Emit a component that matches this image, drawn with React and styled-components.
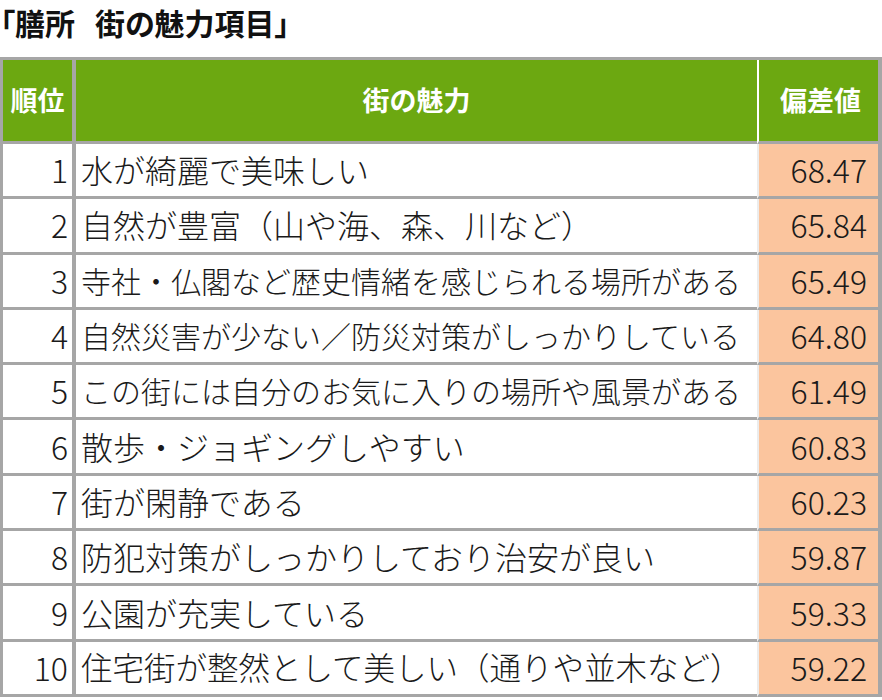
import { styled, createGlobalStyle } from "styled-components";

const GlobalStyle = createGlobalStyle`
	html, body {
		margin: 0;
		padding: 0;
		background: #ffffff;
	}
	body {
		font-family: "Noto Sans CJK JP", "Noto Sans", sans-serif;
		color: #1a1a1a;
		text-spacing-trim: space-all;
	}
`;

const Page = styled.div`
	width: 882px;
`;

const Title = styled.h1`
	margin: 0 0 12px 0;
	height: 45px;
	line-height: 45px;
	font-size: 30px;
	font-weight: 700;
	color: #111;
	white-space: pre;
	font-feature-settings: "palt";
`;

const TitleGap = styled.span`
	display: inline-block;
	width: 20px;
`;

const Table = styled.div`
	display: grid;
	grid-template-columns: 73px 681px 121px;
	grid-template-rows: 84px;
	grid-auto-rows: 55.3px;
	border-top: 3px solid #a6a6a6;
	border-left: 3px solid #a6a6a6;
	border-right: 4px solid #a6a6a6;
	box-sizing: border-box;
	width: 882px;
`;

const HeadCell = styled.div`
	box-sizing: border-box;
	background: #6ca811;
	color: #ffffff;
	font-size: 27px;
	font-weight: 700;
	display: flex;
	align-items: center;
	justify-content: center;
	border-bottom: 3px solid #a6a6a6;
	border-right: ${(p) => (p.$first ? "4px solid #a6a6a6" : "none")};
	border-left: ${(p) => (p.$value ? "2px solid #ffffff" : "none")};
	padding-left: ${(p) => (p.$value ? "4px" : "0")};
	padding-bottom: 2px;
`;

const Cell = styled.div`
	box-sizing: border-box;
	display: flex;
	align-items: center;
	font-size: 32px;
	font-weight: 300;
	line-height: 1;
	border-bottom: 3px solid #a6a6a6;
	background: ${(p) => (p.$value ? "#fbc59e" : "#ffffff")};
	justify-content: ${(p) => (p.$align === "right" ? "flex-end" : "flex-start")};
	border-right: ${(p) => (p.$rank ? "4px solid #a6a6a6" : "none")};
	border-left: ${(p) => (p.$value ? "2px solid #ececec" : "none")};
	padding: ${(p) =>
		p.$rank ? "0 4px 2px 0" : p.$value ? "0 11px 2px 0" : "0 0 2px 5px"};
	white-space: nowrap;
`;

// long labels are shrunk to fit the cell, as the spreadsheet does
const Label = styled(Cell)`
	font-size: ${(p) => p.$size || 32}px;
	font-feature-settings: "chws" 0, "halt" 0, "fwid" 1;
`;

const rows = [
	["水が綺麗で美味しい", "68.47"],
	["自然が豊富（山や海、森、川など）", "65.84"],
	["寺社・仏閣など歴史情緒を感じられる場所がある", "65.49", 30],
	["自然災害が少ない／防災対策がしっかりしている", "64.80", 30],
	["この街には自分のお気に入りの場所や風景がある", "61.49", 30],
	["散歩・ジョギングしやすい", "60.83"],
	["街が閑静である", "60.23"],
	["防犯対策がしっかりしており治安が良い", "59.87"],
	["公園が充実している", "59.33"],
	["住宅街が整然として美しい（通りや並木など）", "59.22", 31.5],
];

const App = () => {
	return (
		<Page>
			<GlobalStyle />
			<Title>
				「膳所
				<TitleGap />
				街の魅力項目」
			</Title>
			<Table>
				<HeadCell $first>順位</HeadCell>
				<HeadCell>街の魅力</HeadCell>
				<HeadCell $value>偏差値</HeadCell>
				{rows.map(([label, score, size], i) => [
					<Cell key={`r${i}`} $rank $align="right">
						{i + 1}
					</Cell>,
					<Label key={`l${i}`} $size={size}>
						{label}
					</Label>,
					<Cell key={`v${i}`} $value $align="right">
						{score}
					</Cell>,
				])}
			</Table>
		</Page>
	);
};

export default App;
